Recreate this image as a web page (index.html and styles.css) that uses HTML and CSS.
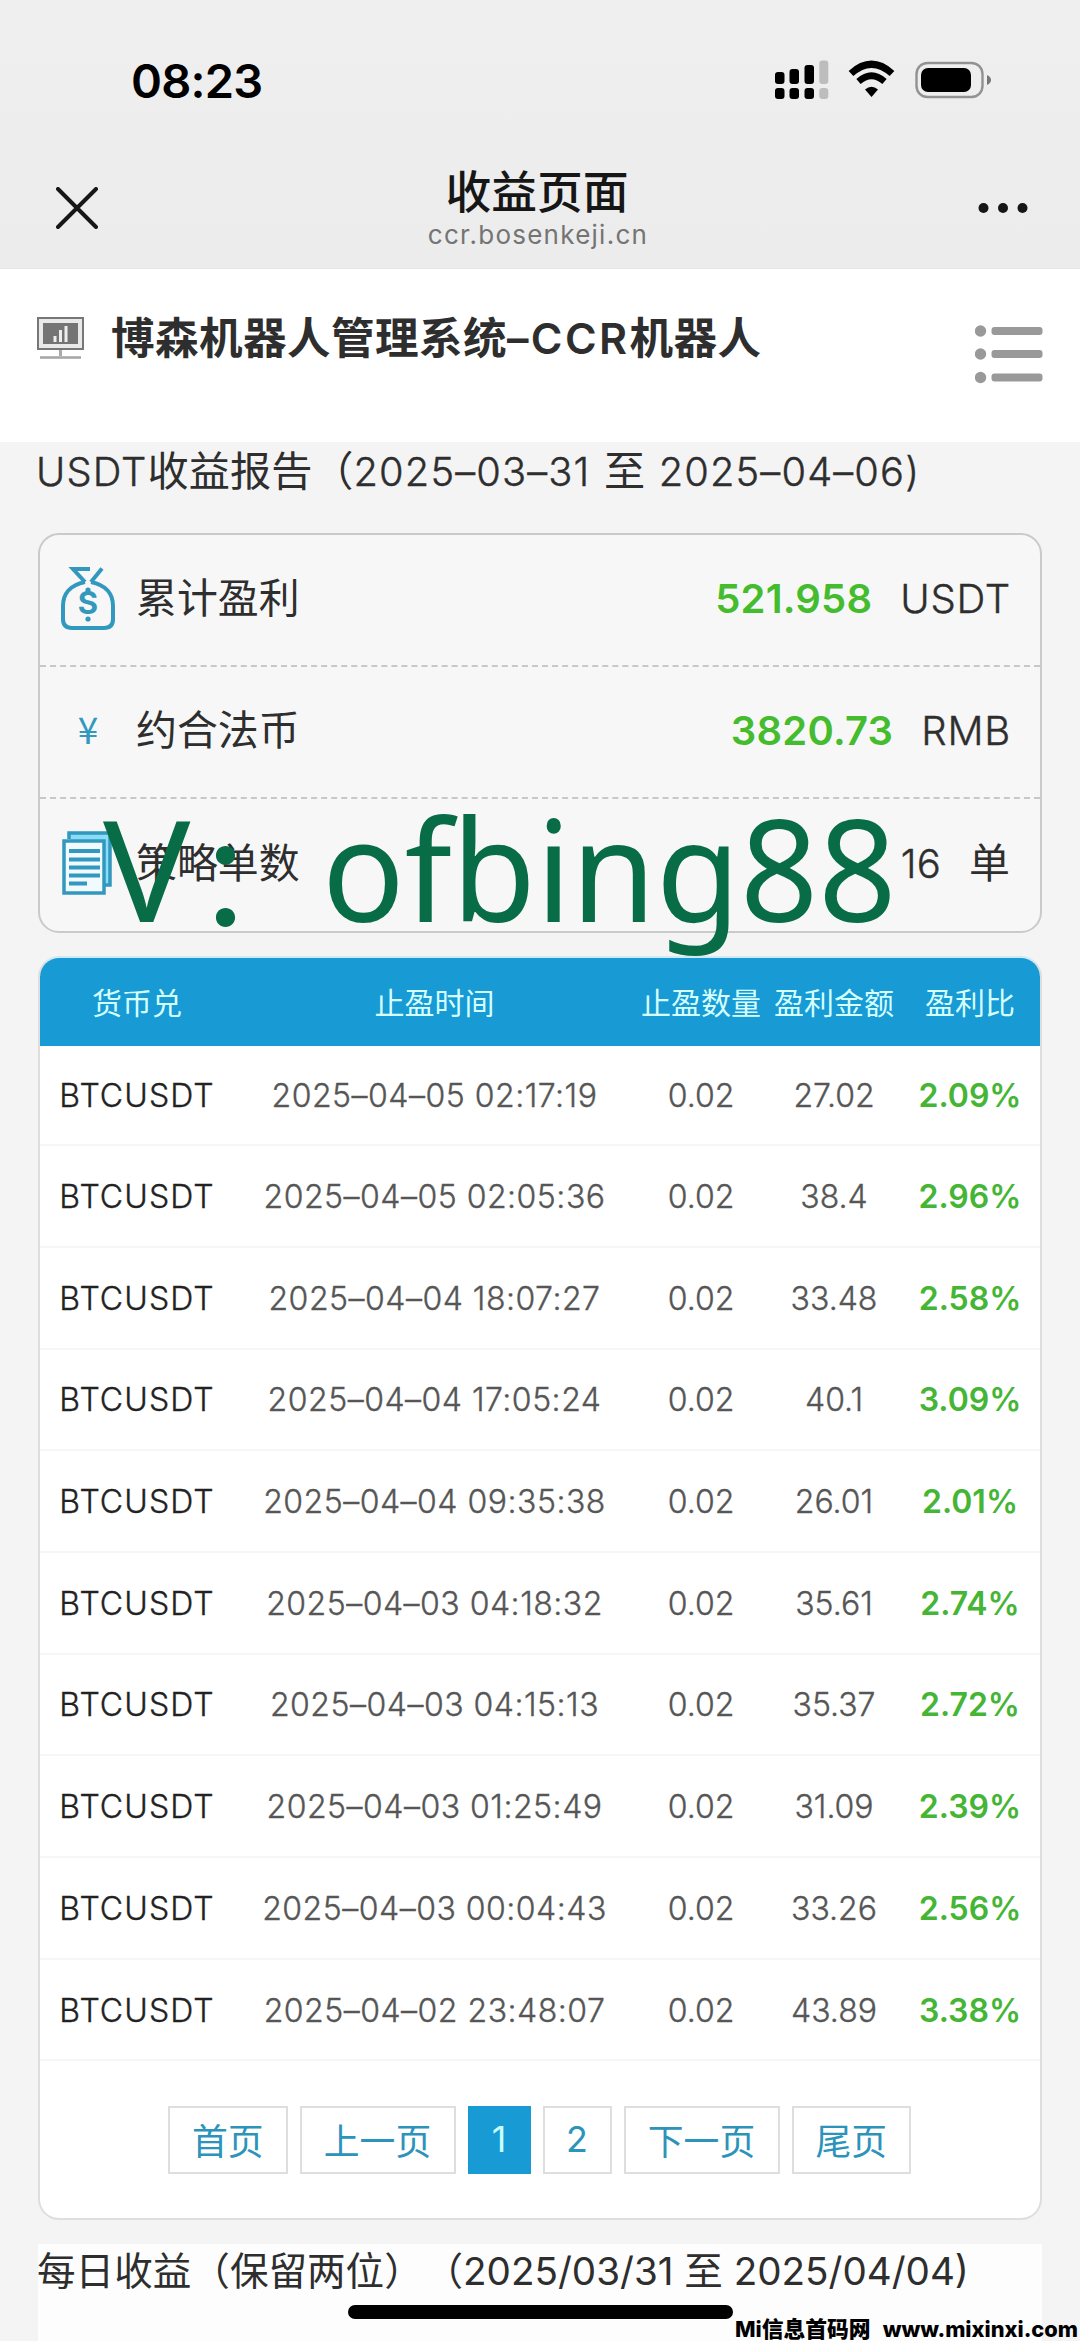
FILE: index.html
```html
<!DOCTYPE html>
<html lang="zh-CN">
<head>
<meta charset="utf-8">
<title>收益页面</title>
<link rel="stylesheet" href="styles.css">
</head>
<body>
<div class="screen">
  <header class="top">
    <div class="status">
      <span class="clock">08:23</span>
      <svg class="status-icons" width="218" height="40" viewBox="0 0 218 40">
        <g fill="#000">
          <rect x="1" y="13" width="9.500" height="12" rx="3"/><rect x="15.500" y="10" width="9.500" height="15" rx="3"/><rect x="30.500" y="6" width="9.500" height="19" rx="3"/>
          <rect x="1" y="29" width="9.500" height="11" rx="3"/><rect x="15.500" y="29" width="9.500" height="11" rx="3"/><rect x="30.500" y="29" width="9.500" height="11" rx="3"/>
        </g>
        <g fill="#bdbdbd"><rect x="45.300" y="1.500" width="9" height="23.500" rx="3"/><rect x="45.300" y="29" width="9" height="11" rx="3"/></g>
        <path d="M77 14.500Q97.500 -4 118 14.500" fill="none" stroke="#000" stroke-width="7"/>
        <path d="M84.500 22.500Q97.500 11 110.500 22.500" fill="none" stroke="#000" stroke-width="6.500"/>
        <path d="M91 30.500Q97.500 25 104 30.500L97.500 38Z"/>
        <rect x="142.500" y="4" width="66" height="34" rx="11" fill="none" stroke="#929292" stroke-width="2.400"/>
        <rect x="147" y="9" width="50" height="24" rx="7"/>
        <path d="M213 16v10q4-2 4-5t-4-5z" fill="#777"/>
      </svg>
    </div>
    <div class="nav">
      <svg class="close" width="42" height="42" viewBox="0 0 42 42"><path d="M2 2L40 40M40 2L2 40" stroke="#161616" stroke-width="4" stroke-linecap="round"/></svg>
      <div class="nav-title"><div class="page-name">收益页面</div><div class="host">ccr.bosenkeji.cn</div></div>
      <svg class="more" width="50" height="12" viewBox="0 0 50 12"><g fill="#161616"><circle cx="5.500" cy="6" r="5"/><circle cx="25" cy="6" r="5"/><circle cx="44.500" cy="6" r="5"/></g></svg>
    </div>
  </header>

  <section class="brand">
    <svg class="monitor" width="48" height="42" viewBox="0 0 48 42"><rect x="1" y="1" width="45" height="31" fill="#e9e9e9" stroke="#777" stroke-width="2"/><rect x="6" y="6" width="35" height="21" fill="#747474"/><path d="M18 25v-6M23.500 25v-12M29 25v-16" stroke="#eee" stroke-width="3"/><path d="M23.500 33v6" stroke="#aaa" stroke-width="3"/><path d="M3 40.500h41" stroke="#a5a5a5" stroke-width="2.500"/></svg>
    <h1 class="brand-name">博森机器人管理系统<span class="brand-latin">–CCR</span>机器人</h1>
    <svg class="menu" width="68" height="60" viewBox="0 0 68 60"><g fill="#999"><circle cx="5.500" cy="7" r="5.700"/><circle cx="5.500" cy="30" r="5.700"/><circle cx="5.500" cy="53.500" r="5.700"/><rect x="16.500" y="3" width="51" height="8" rx="3"/><rect x="16.500" y="26" width="51" height="8" rx="3"/><rect x="16.500" y="49.500" width="51" height="8" rx="3"/></g></svg>
  </section>

  <main class="content">
    <h2 class="report-title"><span class="seg-a">USDT</span>收益报告（<span class="seg-b">2025–03–31</span> 至 <span class="seg-b">2025–04–06)</span></h2>

    <section class="summary">
      <div class="sum-row">
        <svg class="sum-icon" width="56" height="66" viewBox="0 0 56 66"><g fill="none" stroke="#3298be" stroke-width="4"><path d="M25 17L13 4H30"/><path d="M31 17L42 3.500"/><path d="M25 17C10 20 3 29 3 41V54Q3 63 12 63H44Q53 63 53 54V41C53 29 46 20 31 17"/></g><circle cx="28" cy="25" r="2.600" fill="#3298be"/><circle cx="28" cy="54" r="2.600" fill="#3298be"/><text x="28" y="49" class="bag-sign">S</text></svg>
        <span class="sum-label">累计盈利</span><strong class="sum-value">521.958</strong><span class="sum-unit">USDT</span>
      </div>
      <div class="sum-row">
        <span class="sum-icon yen">¥</span>
        <span class="sum-label">约合法币</span><strong class="sum-value">3820.73</strong><span class="sum-unit">RMB</span>
      </div>
      <div class="sum-row">
        <svg class="sum-icon" width="56" height="66" viewBox="0 0 56 66"><path d="M9 9V3H50V55H44" fill="#8bdcf5" stroke="#3298be" stroke-width="3.500"/><rect x="4" y="11" width="40" height="52" fill="#f1fbff" stroke="#3298be" stroke-width="3.500"/><path d="M9 21H40M9 29.500H40M9 37.500H40M9 45.500H40M9 53.500H27" stroke="#3298be" stroke-width="3.800"/></svg>
        <span class="sum-label">策略单数</span><span class="sum-count">16</span><span class="sum-unit dan">单</span>
      </div>
    </section>
    <div class="contact"><span class="contact-v">V</span><span class="contact-colon">：</span><span class="contact-id">ofbing88</span></div>

    <section class="orders">
      <div class="row head"><span>货币兑</span><span>止盈时间</span><span>止盈数量</span><span>盈利金额</span><span>盈利比</span></div>
      <div class="row"><span class="pair">BTCUSDT</span><span class="time">2025–04–05 02:17:19</span><span>0.02</span><span>27.02</span><b class="rate">2.09%</b></div>
      <div class="row"><span class="pair">BTCUSDT</span><span class="time">2025–04–05 02:05:36</span><span>0.02</span><span>38.4</span><b class="rate">2.96%</b></div>
      <div class="row"><span class="pair">BTCUSDT</span><span class="time">2025–04–04 18:07:27</span><span>0.02</span><span>33.48</span><b class="rate">2.58%</b></div>
      <div class="row"><span class="pair">BTCUSDT</span><span class="time">2025–04–04 17:05:24</span><span>0.02</span><span>40.1</span><b class="rate">3.09%</b></div>
      <div class="row"><span class="pair">BTCUSDT</span><span class="time">2025–04–04 09:35:38</span><span>0.02</span><span>26.01</span><b class="rate">2.01%</b></div>
      <div class="row"><span class="pair">BTCUSDT</span><span class="time">2025–04–03 04:18:32</span><span>0.02</span><span>35.61</span><b class="rate">2.74%</b></div>
      <div class="row"><span class="pair">BTCUSDT</span><span class="time">2025–04–03 04:15:13</span><span>0.02</span><span>35.37</span><b class="rate">2.72%</b></div>
      <div class="row"><span class="pair">BTCUSDT</span><span class="time">2025–04–03 01:25:49</span><span>0.02</span><span>31.09</span><b class="rate">2.39%</b></div>
      <div class="row"><span class="pair">BTCUSDT</span><span class="time">2025–04–03 00:04:43</span><span>0.02</span><span>33.26</span><b class="rate">2.56%</b></div>
      <div class="row"><span class="pair">BTCUSDT</span><span class="time">2025–04–02 23:48:07</span><span>0.02</span><span>43.89</span><b class="rate">3.38%</b></div>
      <nav class="pager"><a class="pg w-two">首页</a><a class="pg w-three">上一页</a><a class="pg current">1</a><a class="pg w-num">2</a><a class="pg w-three">下一页</a><a class="pg w-two">尾页</a></nav>
    </section>

    <section class="daily">
      <h2 class="daily-title">每日收益（保留两位）<span class="daily-range">（2025/03/31 至 2025/04/04)</span></h2>
    </section>
  </main>
  <div class="home-bar"></div>
  <div class="site-mark"><span class="mark-name">Mi信息首码网</span><span class="mark-url">www.mixinxi.com</span></div>
</div>
</body>
</html>
```
FILE: styles.css
```css
* { box-sizing: border-box; }
body { margin: 0; background: #f4f4f5; font-family: Inter, "Noto Sans CJK SC", sans-serif; font-weight: 400; color: #2e2e2e; }
h1, h2 { margin: 0; }
.screen { position: relative; width: 1080px; height: 2341px; overflow: hidden; }

.top { height: 269px; background: linear-gradient(#efefef, #ececec); border-bottom: 1px solid #e6e6e6; }
.status { display: flex; justify-content: space-between; align-items: flex-start; padding: 0 88px 0 131px; height: 160px; }
.clock { margin-top: 52px; font-size: 47px; line-height: 57px; font-weight: 600; color: #000; letter-spacing: -.8px; }
.status-icons { margin-top: 59px; }
.nav { display: grid; grid-template-columns: 200px 1fr 200px; }
.close { margin: 27px 0 0 56px; }
.nav-title { text-align: center; }
.page-name { margin: 6px 6px 0 0; font-size: 45.800px; line-height: 54px; font-weight: 500; color: #161616; }
.host { font-size: 26px; line-height: 30px; color: #747474; letter-spacing: 1.250px; margin-right: 4px; }
.more { margin: 42px 0 0 98px; }

.brand { display: flex; height: 173px; background: #fff; padding: 0 37px; }
.monitor { margin-top: 48px; }
.brand-name { margin: 39px 0 0 26px; font-size: 43.600px; line-height: 60px; font-weight: 700; white-space: nowrap; letter-spacing: .4px; }
.brand-latin { font-weight: 600; font-size: 43px; letter-spacing: 2.400px; }
.menu { margin: 55px 0 0 auto; }

.content { padding: 0 38px; }
.report-title { height: 91px; margin-left: -2px; font-size: 41.200px; line-height: 59px; font-weight: 400; white-space: nowrap; word-spacing: 2px; }
.seg-a, .seg-b { font-size: 39.800px; font-weight: 300; letter-spacing: 1.150px; -webkit-text-stroke: .4px; }

.summary { height: 400px; border: 2px solid #cacaca; border-radius: 21px; background: #f7f7f8; display: grid; grid-template-rows: 132px 132px 1fr; }
.sum-row { display: flex; align-items: center; padding: 0 30px 4px 20px; font-size: 40px; border-bottom: 2px dashed #c8c8c8; }
.sum-row:last-child { border-bottom: 0; }
.sum-icon { width: 56px; margin-right: 20px; flex: none; }
.sum-value { margin-left: auto; font-weight: 600; color: #45bc2e; letter-spacing: .2px; }
.sum-unit { margin-left: 28px; font-weight: 300; letter-spacing: .8px; margin-right: -1px; -webkit-text-stroke: .4px; }
.sum-count { margin-left: auto; font-weight: 300; letter-spacing: .3px; -webkit-text-stroke: .4px; }
.sum-label, .dan { font-size: 40.900px; padding-bottom: 5px; font-weight: 400; letter-spacing: 0; -webkit-text-stroke: 0; }
.dan { margin-right: 0; }
.bag-sign { font: 700 31px Inter, sans-serif; fill: #3298be; text-anchor: middle; }
.yen { text-align: center; font-family: "Noto Sans CJK SC", sans-serif; font-size: 37px; color: #3298be; padding-bottom: 5px; }

.contact { position: absolute; left: 103px; top: 767px; height: 200px; line-height: 200px; font-family: "Noto Sans", "Noto Sans CJK SC", sans-serif; font-weight: 400; font-size: 141.400px; color: #086d47; display: flex; white-space: nowrap; }
.contact-v { width: 93px; transform: scaleX(1.030); transform-origin: left; }
.contact-colon { width: 126px; font-size: 126px; padding-top: 10px; margin: 0 2px 0 -2px; }
.contact-id { transform: scaleX(.968); transform-origin: left; }

.orders { margin-top: 23px; height: 1264px; border: 2px solid #dedede; border-top-color: #cfeaf6; border-radius: 21px; background: #fff; overflow: hidden; }
.row { display: grid; grid-template-columns: 194px 401px 132px 134px 1fr; height: 101.700px; padding: 1px 1px 0 0; align-items: center; text-align: center; border-bottom: 2px solid #f6f6f7; font-size: 32px; font-weight: 300; color: #565656; white-space: nowrap; -webkit-text-stroke: .35px; }
.head { height: 88px; padding: 0 1px 3px 0; background: #189ad5; border: 0; font-size: 30px; font-weight: 400; color: #d4ffff; -webkit-text-stroke: 0; }
.head + .row { height: 100.200px; }
.pair { color: #222; letter-spacing: 1.100px; }
.time { letter-spacing: .500px; }
.rate { font-weight: 600; color: #45b535; -webkit-text-stroke: 0; }
.pager { display: flex; gap: 12px; margin: 45px 0 0 128px; }
.pg { height: 68px; border: 2px solid #dedede; padding-bottom: 3px; display: flex; align-items: center; justify-content: center; font-size: 35.800px; color: #2c93ba; }
.w-two { width: 119.500px; }
.w-three { width: 156px; }
.w-num { width: 69px; }
.current { width: 63px; background: #189ad5; border-color: #189ad5; color: #c8ffff; }

.daily { margin-top: 24px; height: 98px; background: #fdfdfd; }
.daily-title { margin-left: -1px; font-size: 38.600px; line-height: 54px; font-weight: 400; white-space: nowrap; }
.daily-range { margin-left: 21px; }
.home-bar { position: absolute; left: 348px; top: 2305px; width: 385px; height: 14px; border-radius: 7px; background: #000; }
.site-mark { position: absolute; right: 2px; bottom: 1px; display: flex; gap: 12px; font-size: 21.800px; line-height: 22px; font-weight: 800; color: #000; }
```
